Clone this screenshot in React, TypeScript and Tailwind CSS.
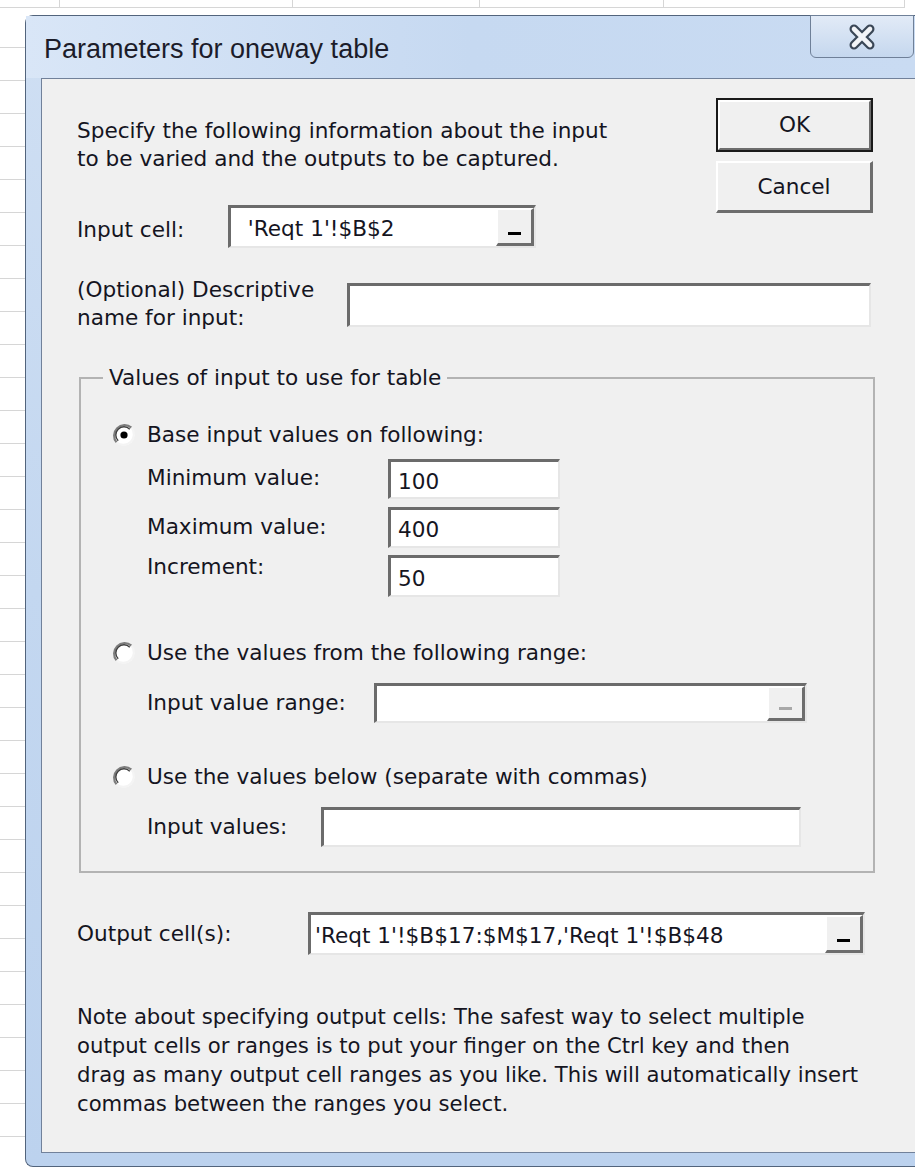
import type { ReactNode } from 'react';

const body = "font-['DejaVu_Sans',sans-serif] text-[21.6px] leading-[28px] text-[#15151f]";

// Sunken classic text box
function Field({
  width,
  height,
  value,
  pad = 8,
  picker,
  disabled,
}: {
  width: number;
  height: number;
  value?: string;
  pad?: number;
  picker?: boolean;
  disabled?: boolean;
}) {
  return (
    <div
      className="flex items-center bg-white border-t-[3px] border-l-[3px] border-b-2 border-r-2 border-t-[#6b6b6b] border-l-[#6b6b6b] border-b-[#e6e6e6] border-r-[#e6e6e6]"
      style={{ width, height }}
    >
      <span className="flex-1 truncate pt-[4px] whitespace-pre" style={{ paddingLeft: pad }}>
        {value}
      </span>
      {picker && <PickerButton disabled={disabled} />}
    </div>
  );
}

function PickerButton({ disabled }: { disabled?: boolean }) {
  return (
    <div className="w-[38px] h-full flex items-end justify-center pb-[8px] bg-[#f0f0f0] border-t-2 border-l-2 border-t-white border-l-white border-b-[3px] border-r-[3px] border-b-[#6d6d6d] border-r-[#6d6d6d]">
      <div className={`w-[13px] h-[3px] ${disabled ? 'bg-[#a8a8a8]' : 'bg-black'}`} />
    </div>
  );
}

function Radio({ checked }: { checked?: boolean }) {
  return (
    <svg width="24" height="24" viewBox="0 0 24 24" className="shrink-0">
      <circle cx="12" cy="12" r="10.5" fill="#fff" />
      <path d="M4.6 19.4 A10.5 10.5 0 0 1 19.4 4.6" fill="none" stroke="#7d7d7d" strokeWidth="2.2" />
      <path d="M19.4 4.6 A10.5 10.5 0 0 1 4.6 19.4" fill="none" stroke="#f4f4f4" strokeWidth="2.2" />
      <path d="M6.2 17.8 A8.2 8.2 0 0 1 17.8 6.2" fill="none" stroke="#3e3e3e" strokeWidth="1.4" />
      {checked && <circle cx="12" cy="12" r="3.6" fill="#000" />}
    </svg>
  );
}

function RadioRow({ checked, children, mt }: { checked?: boolean; children: ReactNode; mt: number }) {
  return (
    <div className="flex items-center gap-[11px] pl-[31px]" style={{ marginTop: mt }}>
      <Radio checked={checked} />
      <span>{children}</span>
    </div>
  );
}

function ValueRow({
  label,
  labelWidth,
  mt,
  labelShift = 0,
  children,
}: {
  label: string;
  labelWidth: number;
  mt: number;
  labelShift?: number;
  children: ReactNode;
}) {
  return (
    <div className="flex items-center pl-[66px]" style={{ marginTop: mt }}>
      <span className="shrink-0" style={{ width: labelWidth, marginTop: labelShift }}>
        {label}
      </span>
      {children}
    </div>
  );
}

export default function App() {
  return (
    <div className="w-[915px] h-[1168px] bg-white overflow-hidden flex flex-col">
      {/* spreadsheet behind the dialog */}
      <div className="h-[15px] flex shrink-0">
        <div className="w-[60px] h-[8px] border-r border-b border-[#d6d6d6]" />
        <div className="w-[233px] h-[8px] border-r border-b border-[#d6d6d6]" />
        <div className="w-[187px] h-[8px] border-r border-b border-[#d6d6d6]" />
        <div className="w-[184px] h-[8px] border-r border-b border-[#d6d6d6]" />
        <div className="w-[241px] h-[8px] border-r border-b border-[#d6d6d6]" />
      </div>
      <div className="flex flex-1">
        <div className="w-[25px] shrink-0 bg-[repeating-linear-gradient(to_bottom,transparent_0px,transparent_32px,#d6d6d6_32px,#d6d6d6_33px)]" />

        {/* dialog window */}
        <div className="flex-1 mb-[1px] flex flex-col rounded-tl-[8px] rounded-bl-[8px] border-l border-t border-b border-[#52647c] bg-gradient-to-b from-[#cfdff3] via-[#c3d7f0] to-[#bcd2ee]">
          <div className="h-[62px] shrink-0 flex items-start bg-gradient-to-r from-[#d9e6f7] via-[#c6d9f1] to-[#c9dbf2]">
            <div className="pl-[18px] pt-[17px] font-['Liberation_Sans_Narrow','Liberation_Sans',sans-serif] text-[27px] leading-[32px] text-[#1c1c2a] whitespace-nowrap">
              Parameters for oneway table
            </div>
            <div className="ml-auto mr-[1px] w-[104px] h-[43px] -mt-px flex items-center justify-center rounded-b-[6px] border border-[#6f8098] bg-gradient-to-b from-[#e2ebf7] to-[#c5d7ee]">
              <svg width="30" height="26" viewBox="0 0 30 26">
                <path d="M7 5 L23 21 M23 5 L7 21" stroke="#3a4656" strokeWidth="9" strokeLinecap="round" />
                <path d="M7 5 L23 21 M23 5 L7 21" stroke="#f2f4f7" strokeWidth="4.6" strokeLinecap="round" />
              </svg>
            </div>
          </div>

          <div className="flex-1 flex pl-[15px] pb-[13px]">
            {/* client area */}
            <div className={`flex-1 flex flex-col bg-[#f0f0f0] border-l border-t border-b border-[#71819a] pl-[35px] ${body}`}>
              <div className="flex pr-[42px]">
                <div className="flex-1 pt-[38px]">
                  <div className="whitespace-nowrap">Specify the following information about the input</div>
                  <div className="whitespace-nowrap">to be varied and the outputs to be captured.</div>
                  <div className="flex items-center mt-[32px]">
                    <span className="w-[151px] shrink-0 mt-[6px]">Input cell:</span>
                    <Field width={308} height={43} value={" 'Reqt 1'!$B$2"} pad={10} picker />
                  </div>
                </div>
                <div className="w-[157px] pt-[19px] flex flex-col gap-[9px]">
                  <button className="h-[54px] border-2 border-[#1a1a1a] bg-[#f0f0f0] flex">
                    <span className="flex-1 flex items-center justify-center border-t-2 border-l-2 border-t-white border-l-white border-b-2 border-r-2 border-b-[#6d6d6d] border-r-[#6d6d6d]">
                      OK
                    </span>
                  </button>
                  <button className="h-[52px] bg-[#f0f0f0] flex items-center justify-center border-t-2 border-l-2 border-t-white border-l-white border-b-[3px] border-r-[3px] border-b-[#6d6d6d] border-r-[#6d6d6d]">
                    Cancel
                  </button>
                </div>
              </div>

              <div className="flex items-start mt-[28px]">
                <div className="w-[270px] shrink-0">
                  <div>(Optional) Descriptive</div>
                  <div>name for input:</div>
                </div>
                <div className="mt-[7px]">
                  <Field width={524} height={44} />
                </div>
              </div>

              <fieldset className="ml-[2px] mt-[32px] w-[796px] border-2 border-[#b3b3b3] pb-[24px]">
                <legend className="ml-[22px] px-[6px]">Values of input to use for table</legend>
                <RadioRow checked mt={29}>
                  Base input values on following:
                </RadioRow>
                <ValueRow label="Minimum value:" labelWidth={241} mt={10} labelShift={-2}>
                  <Field width={172} height={40} value="100" pad={7} />
                </ValueRow>
                <ValueRow label="Maximum value:" labelWidth={241} mt={8} labelShift={-2}>
                  <Field width={172} height={41} value="400" pad={7} />
                </ValueRow>
                <ValueRow label="Increment:" labelWidth={241} mt={7} labelShift={-18}>
                  <Field width={172} height={42} value="50" pad={7} />
                </ValueRow>

                <RadioRow mt={42}>Use the values from the following range:</RadioRow>
                <ValueRow label="Input value range:" labelWidth={227} mt={16}>
                  <Field width={433} height={40} picker disabled />
                </ValueRow>

                <RadioRow mt={40}>Use the values below (separate with commas)</RadioRow>
                <ValueRow label="Input values:" labelWidth={174} mt={16}>
                  <Field width={480} height={40} />
                </ValueRow>
              </fieldset>

              <div className="flex items-center mt-[39px]">
                <span className="w-[231px] shrink-0">Output cell(s):</span>
                <Field width={557} height={43} value="'Reqt 1'!$B$17:$M$17,'Reqt 1'!$B$48" pad={4} picker />
              </div>

              <div className="mt-[47px] text-[21.2px] leading-[29px] whitespace-nowrap">
                <div>Note about specifying output cells: The safest way to select multiple</div>
                <div>output cells or ranges is to put your finger on the Ctrl key and then</div>
                <div>drag as many output cell ranges as you like. This will automatically insert</div>
                <div>commas between the ranges you select.</div>
              </div>
            </div>
          </div>
        </div>
      </div>
    </div>
  );
}
